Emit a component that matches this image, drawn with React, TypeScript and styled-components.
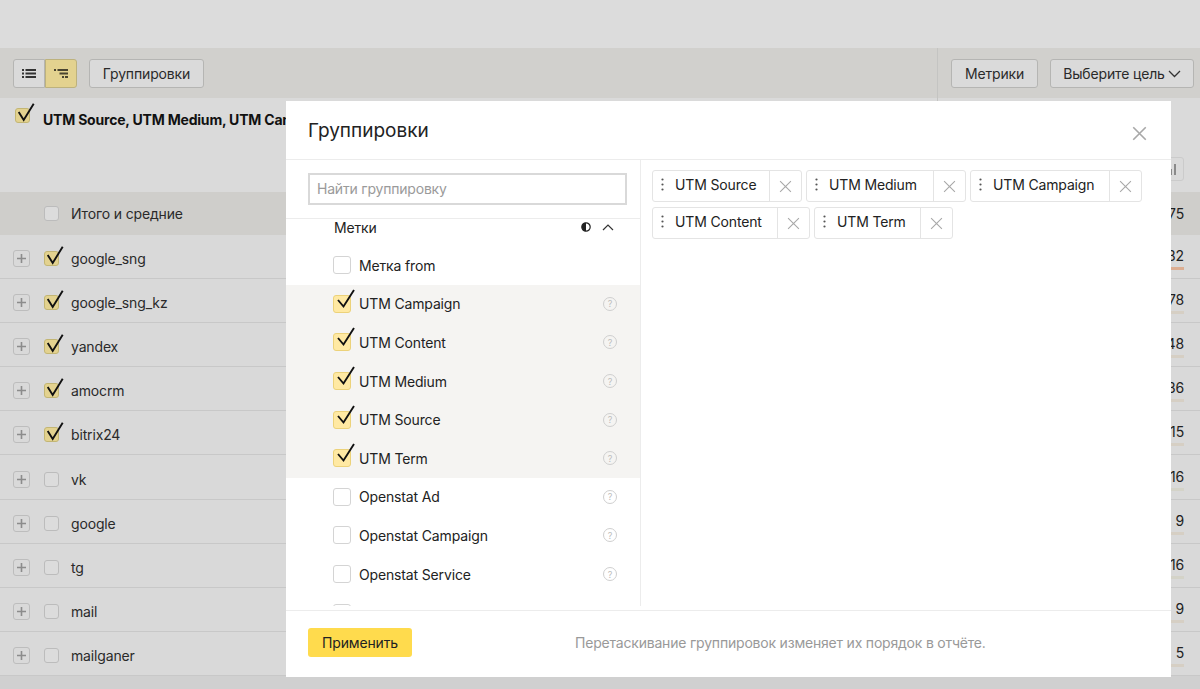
import React from 'react'
import styled, { createGlobalStyle } from 'styled-components'

const GlobalStyle = createGlobalStyle`
  html, body {
    margin: 0;
    padding: 0;
    background: #d0d0d0;
  }
  body {
    font-family: "Inter", "Liberation Sans", sans-serif;
    letter-spacing: -0.15px;
    color: #1f1f1f;
  }
`;

const Page = styled.div`
  position: relative;
  width: 1200px;
  height: 689px;
  overflow: hidden;
  background: #d0d0d0;
`;

const TopStrip = styled.div`
  height: 48px;
  background: #dcdcdc;
`;

const Toolbar = styled.div`
  height: 50px;
  box-sizing: border-box;
  padding: 11px 6px 0 13px;
  display: flex;
  align-items: flex-start;
  justify-content: space-between;
  background: #d1d0cd;
`;

const ToolGroup = styled.div`
  display: flex;
  gap: ${p => p.$gap}px;
`;

const Segments = styled.div`
  display: flex;
`;

const Segment = styled.div`
  width: 32px;
  height: 29px;
  box-sizing: border-box;
  display: flex;
  align-items: center;
  justify-content: center;
  border: 1px solid ${p => (p.$active ? '#bdb27d' : '#b5b5b3')};
  border-radius: ${p => (p.$active ? '0 3px 3px 0' : '3px 0 0 3px')};
  background: ${p => (p.$active ? '#e3d28f' : '#dadada')};
`;

const ToolButton = styled.div`
  width: ${p => p.$w}px;
  height: 29px;
  box-sizing: border-box;
  display: flex;
  align-items: center;
  justify-content: center;
  gap: 3px;
  border: 1px solid #b5b5b3;
  border-radius: 3px;
  background: #dadada;
  font-size: 14px;
  color: #2a2a2a;
  white-space: nowrap;
`;

const Divider = styled.div`
  position: absolute;
  left: 937px;
  top: 48px;
  width: 1px;
  height: 53px;
  background: #c4c4c2;
`;

const Summary = styled.div`
  height: 94px;
  box-sizing: border-box;
  padding: 10px 16px 0 15px;
  display: flex;
  justify-content: space-between;
  background: #dadada;
`;

const GroupTitle = styled.div`
  display: flex;
  gap: 13px;
  font-size: 14px;
  font-weight: 700;
  letter-spacing: -0.2px;
  line-height: 24px;
  color: #111;
  white-space: nowrap;
`;

const ChartButton = styled.div`
  width: 26px;
  height: 24px;
  margin-top: 49px;
  box-sizing: border-box;
  display: flex;
  align-items: flex-end;
  justify-content: flex-end;
  gap: 2px;
  padding: 0 7px 5px 0;
  border: 1px solid #cbcbcb;
  border-radius: 3px;
`;

const ChartBar = styled.div`
  width: 2px;
  height: ${p => p.$h}px;
  background: #8a8a8a;
`;

const TotalRow = styled.div`
  height: 43px;
  box-sizing: border-box;
  padding: 0 16px 0 44px;
  display: flex;
  align-items: center;
  background: #cfcecb;
  font-size: 14px;
  color: #2a2a2a;
`;

const Row = styled.div`
  height: 44.1px;
  box-sizing: border-box;
  padding: 4px 16px 0 13px;
  display: flex;
  align-items: center;
  background: #d9d9d9;
  border-bottom: 1px solid #c8c8c8;
  font-size: 14px;
  color: #2a2a2a;
`;

const Expand = styled.div`
  width: 17px;
  height: 17px;
  margin-right: 14px;
  box-sizing: border-box;
  display: flex;
  align-items: center;
  justify-content: center;
  border: 1px solid #bdbdbd;
  border-radius: 3px;
  color: #8c8c8c;
`;

const RowLabel = styled.span`
  margin-left: 12px;
  flex: 1;
`;

const Metric = styled.div`
  width: 40px;
  text-align: right;
  font-size: 14px;
  line-height: 18px;
  color: #222;
  white-space: nowrap;
`;

const MetricBar = styled.div`
  height: 3px;
  margin-top: 2px;
  background: ${p => p.$c};
`;

const DimBox = styled.div`
  position: relative;
  flex: none;
  width: 15px;
  height: 15px;
  box-sizing: border-box;
  border: 1px solid ${p => (p.$on ? '#c3b674' : '#bcbcbc')};
  border-radius: 3px;
  background: ${p => (p.$on ? '#e3d28f' : '#dcdcdc')};
`;

const Tick = styled.svg`
  position: absolute;
  left: 1px;
  top: -8px;
  overflow: visible;
`;

const Modal = styled.div`
  position: absolute;
  left: 286px;
  top: 101px;
  width: 885px;
  height: 576px;
  display: flex;
  flex-direction: column;
  background: #fff;
`;

const ModalHead = styled.div`
  height: 59px;
  flex: none;
  box-sizing: border-box;
  padding: 0 24px 0 22px;
  display: flex;
  align-items: center;
  justify-content: space-between;
  border-bottom: 1px solid #ececec;
`;

const ModalTitle = styled.div`
  font-size: 19px;
  letter-spacing: 0;
  color: #222;
`;

const ModalClose = styled.div`
  display: flex;
  margin-top: 6px;
`;

const ModalBody = styled.div`
  flex: 1;
  min-height: 0;
  display: flex;
  padding-bottom: 4px;
`;

const LeftCol = styled.div`
  width: 355px;
  flex: none;
  box-sizing: border-box;
  display: flex;
  flex-direction: column;
  border-right: 1px solid #ececec;
`;

const SearchWrap = styled.div`
  height: 59px;
  flex: none;
  box-sizing: border-box;
  padding: 13px 13px 0 22px;
  border-bottom: 1px solid #ececec;
`;

const SearchBox = styled.div`
  height: 32px;
  box-sizing: border-box;
  padding: 0 0 2px 7px;
  display: flex;
  align-items: center;
  border: 2px solid #d9d9d9;
  font-size: 14px;
  letter-spacing: -0.2px;
  color: #9a9a9a;
`;

const GroupList = styled.div`
  flex: 1;
  min-height: 0;
  overflow: hidden;
`;

const GroupHead = styled.div`
  height: 16px;
  box-sizing: border-box;
  padding: 0 26px 0 48px;
  display: flex;
  align-items: center;
  gap: 11px;
  font-size: 14px;
  color: #222;
`;

const GroupName = styled.span`
  flex: 1;
`;

const Item = styled.div`
  height: 38.6px;
  box-sizing: border-box;
  padding: 0 23px 0 47px;
  display: flex;
  align-items: center;
  background: ${p => (p.$on ? '#f5f4f2' : 'transparent')};
  font-size: 14px;
  color: #222;
`;

const ItemLabel = styled.span`
  margin-left: 8px;
  flex: 1;
`;

const ListGap = styled.div`
  height: 11px;
`;

const Box = styled.div`
  position: relative;
  flex: none;
  width: 18px;
  height: 18px;
  box-sizing: border-box;
  border: 1px solid ${p => (p.$on ? '#ecd27a' : '#d4d4d4')};
  border-radius: 3px;
  background: ${p => (p.$on ? '#ffe9a3' : '#fff')};
`;

const Help = styled.div`
  width: 14px;
  height: 14px;
  box-sizing: border-box;
  display: flex;
  align-items: center;
  justify-content: center;
  border: 1px solid #cfcfcf;
  border-radius: 50%;
  font-size: 9px;
  color: #bdbdbd;
`;

const RightCol = styled.div`
  flex: 1;
  box-sizing: border-box;
  padding: 10px 0 0 11px;
  display: flex;
  flex-wrap: wrap;
  align-content: flex-start;
  gap: 5px 4px;
  width: 500px;
`;

const Chip = styled.div`
  height: 32px;
  box-sizing: border-box;
  display: flex;
  align-items: center;
  border: 1px solid #e4e4e4;
  border-radius: 3px;
  font-size: 14px;
  color: #222;
`;

const ChipHandle = styled.div`
  width: 18px;
  margin-right: 4px;
  padding-bottom: 3px;
  display: flex;
  justify-content: center;
  color: #555;
`;

const ChipLabel = styled.div`
  width: ${p => p.$w}px;
  padding-bottom: 3px;
  white-space: nowrap;
`;

const ChipClose = styled.div`
  width: 32px;
  height: 100%;
  box-sizing: border-box;
  display: flex;
  align-items: center;
  justify-content: center;
  border-left: 1px solid #e4e4e4;
`;

const ModalFoot = styled.div`
  height: 67px;
  flex: none;
  box-sizing: border-box;
  padding: 0 0 3px 22px;
  display: flex;
  align-items: center;
  border-top: 1px solid #ececec;
`;

const Apply = styled.div`
  width: 104px;
  height: 29px;
  display: flex;
  align-items: center;
  justify-content: center;
  border-radius: 3px;
  background: #ffdb4d;
  font-size: 14px;
  color: #222;
`;

const Hint = styled.div`
  margin-left: 163px;
  font-size: 14px;
  letter-spacing: -0.2px;
  color: #999;
  white-space: nowrap;
`;

const Check = ({ large }: { large?: boolean }) => (
  <Tick width="20" height="20" viewBox="0 0 20 20">
    <path
      d={large ? 'M3 12 L8.5 18.5 L19 2' : 'M1.7 11 L6.7 19 L16.7 2.7'}
      fill="none"
      stroke="#111"
      strokeWidth="1.9"
    />
  </Tick>
)

const Cross = ({ size, color }: { size: number; color: string }) => (
  <svg width={size} height={size} viewBox="0 0 12 12">
    <path d="M1 1 L11 11 M11 1 L1 11" stroke={color} strokeWidth={size > 14 ? 1.3 : 1} fill="none" />
  </svg>
)

const Dots = () => (
  <svg width="3" height="13" viewBox="0 0 3 13">
    <circle cx="1.5" cy="1.5" r="1.1" fill="currentColor" />
    <circle cx="1.5" cy="6.5" r="1.1" fill="currentColor" />
    <circle cx="1.5" cy="11.5" r="1.1" fill="currentColor" />
  </svg>
)

const rows = [
  { name: 'google_sng', on: true, value: '1 232', bar: '#dcae92' },
  { name: 'google_sng_kz', on: true, value: '678', bar: '#d6cfc4' },
  { name: 'yandex', on: true, value: '548', bar: '#d6cfc4' },
  { name: 'amocrm', on: true, value: '436', bar: '#d6cfc4' },
  { name: 'bitrix24', on: true, value: '115', bar: '#d6cfc4' },
  { name: 'vk', on: false, value: '116', bar: '#d4d3c8' },
  { name: 'google', on: false, value: '9', bar: '#d6cfc4' },
  { name: 'tg', on: false, value: '116', bar: '#d4d3c8' },
  { name: 'mail', on: false, value: '9', bar: '#d6cfc4' },
  { name: 'mailganer', on: false, value: '5', bar: '#d6cfc4' },
]

const items = [
  { name: 'Метка from', on: false, help: false },
  { name: 'UTM Campaign', on: true, help: true },
  { name: 'UTM Content', on: true, help: true },
  { name: 'UTM Medium', on: true, help: true },
  { name: 'UTM Source', on: true, help: true },
  { name: 'UTM Term', on: true, help: true },
  { name: 'Openstat Ad', on: false, help: true },
  { name: 'Openstat Campaign', on: false, help: true },
  { name: 'Openstat Service', on: false, help: true },
  // the next row is scrolled away, only the tops of its box and icon show
  { name: '', on: false, help: true },
]

const chips = [
  { name: 'UTM Source', w: 94 },
  { name: 'UTM Medium', w: 104 },
  { name: 'UTM Campaign', w: 116 },
  { name: 'UTM Content', w: 102 },
  { name: 'UTM Term', w: 83 },
]

export default function App() {
  return (
    <Page>
      <GlobalStyle />
      <TopStrip />
      <Toolbar>
        <ToolGroup $gap={12}>
          <Segments>
            <Segment>
              <svg width="14" height="9" viewBox="0 0 14 9">
                <path d="M0 1h2M3.5 1h10.5M0 4.5h2M3.5 4.5h10.5M0 8h2M3.5 8h10.5" stroke="#333" strokeWidth="1.9" />
              </svg>
            </Segment>
            <Segment $active>
              <svg width="14" height="9" viewBox="0 0 14 9">
                <path d="M0 1h2M3.5 1h10.5M5.5 4.5h8.5M8 8h2M11 8h3" stroke="#4a4430" strokeWidth="1.9" />
              </svg>
            </Segment>
          </Segments>
          <ToolButton $w={115}>Группировки</ToolButton>
        </ToolGroup>
        <ToolGroup $gap={12}>
          <ToolButton $w={87}>Метрики</ToolButton>
          <ToolButton $w={144}>
            Выберите цель
            <svg width="13" height="8" viewBox="0 0 13 8">
              <path d="M1 1 L6.5 6.5 L12 1" stroke="#333" strokeWidth="1.3" fill="none" />
            </svg>
          </ToolButton>
        </ToolGroup>
      </Toolbar>
      <Divider />
      <Summary>
        <GroupTitle>
          <DimBox $on>
            <Check />
          </DimBox>
          UTM Source, UTM Medium, UTM Campaign, UTM Content, UTM Term
        </GroupTitle>
        <ChartButton>
          <ChartBar $h={6} />
          <ChartBar $h={11} />
        </ChartButton>
      </Summary>
      <TotalRow>
        <DimBox />
        <RowLabel>Итого и средние</RowLabel>
        <Metric>2 475</Metric>
      </TotalRow>
      {rows.map(r => (
        <Row key={r.name}>
          <Expand>
            <svg width="9" height="9" viewBox="0 0 9 9">
              <path d="M4.5 0v9M0 4.5h9" stroke="currentColor" strokeWidth="1.6" />
            </svg>
          </Expand>
          <DimBox $on={r.on}>{r.on && <Check />}</DimBox>
          <RowLabel>{r.name}</RowLabel>
          <Metric>
            {r.value}
            <MetricBar $c={r.bar} />
          </Metric>
        </Row>
      ))}

      <Modal>
        <ModalHead>
          <ModalTitle>Группировки</ModalTitle>
          <ModalClose>
            <Cross size={15} color="#a8a8a8" />
          </ModalClose>
        </ModalHead>
        <ModalBody>
          <LeftCol>
            <SearchWrap>
              <SearchBox>Найти группировку</SearchBox>
            </SearchWrap>
            <GroupList>
              <GroupHead>
                <GroupName>Метки</GroupName>
                <svg width="10" height="10" viewBox="0 0 10 10">
                  <circle cx="5" cy="5" r="4.2" fill="#fff" stroke="#222" strokeWidth="1.2" />
                  <path d="M5 .8a4.2 4.2 0 0 0 0 8.4z" fill="#222" />
                </svg>
                <svg width="12" height="7" viewBox="0 0 12 7">
                  <path d="M1 6 L6 1 L11 6" stroke="#333" strokeWidth="1.2" fill="none" />
                </svg>
              </GroupHead>
              <ListGap />
              {items.map(it => (
                <Item key={it.name} $on={it.on}>
                  <Box $on={it.on}>{it.on && <Check large />}</Box>
                  <ItemLabel>{it.name}</ItemLabel>
                  {it.help && <Help>{it.name && '?'}</Help>}
                </Item>
              ))}
            </GroupList>
          </LeftCol>
          <RightCol>
            {chips.map(c => (
              <Chip key={c.name}>
                <ChipHandle>
                  <Dots />
                </ChipHandle>
                <ChipLabel $w={c.w}>{c.name}</ChipLabel>
                <ChipClose>
                  <Cross size={13} color="#a8a8a8" />
                </ChipClose>
              </Chip>
            ))}
          </RightCol>
        </ModalBody>
        <ModalFoot>
          <Apply>Применить</Apply>
          <Hint>Перетаскивание группировок изменяет их порядок в отчёте.</Hint>
        </ModalFoot>
      </Modal>
    </Page>
  )
}
